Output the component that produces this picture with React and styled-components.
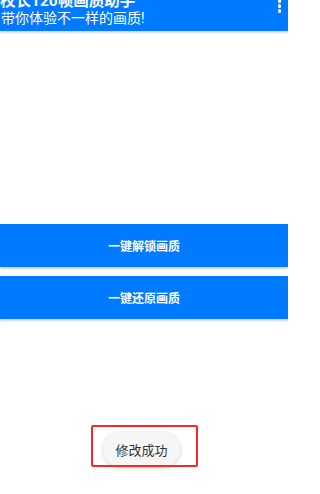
import styled, { createGlobalStyle } from "styled-components";

const GlobalStyle = createGlobalStyle`
  html, body {
    margin: 0;
    padding: 0;
    background: #ffffff;
  }
  body {
    font-family: "Roboto", "Noto Sans CJK SC", sans-serif;
  }
`;

const Page = styled.div`
  position: relative;
  width: 288px;
  height: 494px;
  overflow: hidden;
  background: #ffffff;
`;

const Header = styled.header`
  height: 31px;
  overflow: hidden;
  display: flex;
  align-items: flex-end;
  justify-content: space-between;
  padding: 0 7px 4px 0;
  box-sizing: border-box;
  background: #007aff;
  box-shadow: 0 1px 3px rgba(0, 0, 0, 0.25);
  color: #ffffff;
`;

const TitleBox = styled.div`
  display: flex;
  flex-direction: column;
`;

const Title = styled.div`
  font-size: 15.5px;
  font-weight: 700;
  line-height: 18px;
  white-space: nowrap;
`;

const Subtitle = styled.div`
  font-size: 14px;
  line-height: 17px;
  padding-left: 1px;
  white-space: nowrap;
`;

const Kebab = styled.div`
  align-self: flex-start;
  margin-top: -1px;
  display: flex;
  flex-direction: column;
  gap: 1.5px;
`;

const Dot = styled.span`
  width: 3.5px;
  height: 3.5px;
  border-radius: 50%;
  background: #ffffff;
`;

const Body = styled.main`
  display: flex;
  flex-direction: column;
  gap: 9px;
  padding-top: 193px;
`;

const BigButton = styled.button`
  height: 43px;
  width: 100%;
  border: none;
  margin: 0;
  background: #007aff;
  color: #ffffff;
  font-family: "Roboto", "Noto Sans CJK SC", sans-serif;
  font-size: 12px;
  font-weight: 700;
  box-shadow: 0 1.5px 2px rgba(0, 0, 0, 0.18);
  cursor: pointer;
`;

const Toast = styled.div`
  position: absolute;
  left: 103px;
  top: 432px;
  width: 77px;
  height: 35px;
  box-sizing: border-box;
  display: flex;
  align-items: center;
  justify-content: center;
  border-radius: 18px;
  background: #f6f6f6;
  box-shadow: 0 1px 4px rgba(0, 0, 0, 0.18);
  color: #333333;
  font-size: 13px;
  white-space: nowrap;
`;

const Marker = styled.div`
  position: absolute;
  left: 91px;
  top: 425px;
  width: 107px;
  height: 42px;
  box-sizing: border-box;
  border: 2px solid #f42a2a;
  border-radius: 2px;
  pointer-events: none;
`;

export default function App() {
  return (
    <Page>
      <GlobalStyle />
      <Header>
        <TitleBox>
          <Title>校长120帧画质助手</Title>
          <Subtitle>带你体验不一样的画质!</Subtitle>
        </TitleBox>
        <Kebab>
          <Dot />
          <Dot />
          <Dot />
        </Kebab>
      </Header>
      <Body>
        <BigButton>一键解锁画质</BigButton>
        <BigButton>一键还原画质</BigButton>
      </Body>
      <Toast>修改成功</Toast>
      <Marker />
    </Page>
  );
}
